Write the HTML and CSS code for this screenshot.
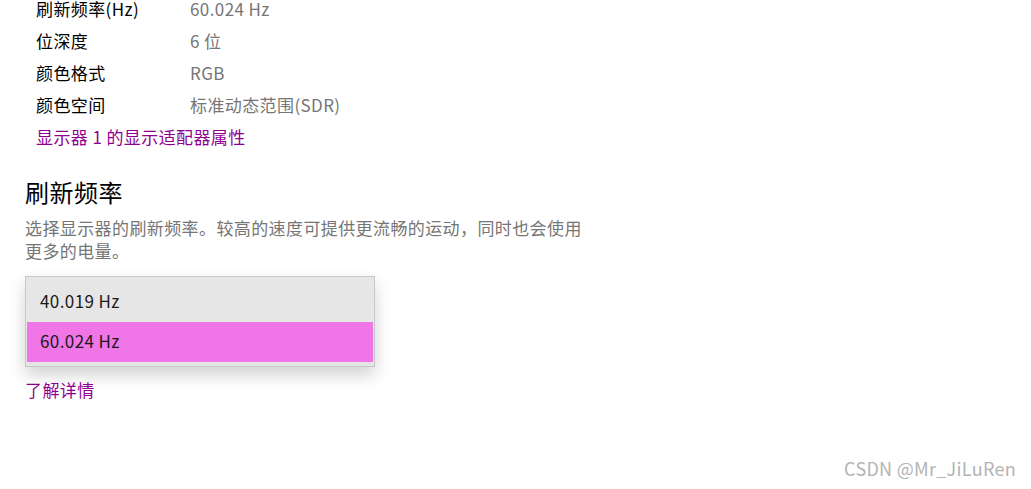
FILE: index.html
```html
<!DOCTYPE html>
<html lang="zh-CN">
<head>
    <meta charset="UTF-8">
    <title>刷新频率</title>
    <link rel="stylesheet" href="styles.css">
</head>
<body>
    <div class="page">
        <div class="props">
            <div class="prop-row"><span class="prop-name">刷新频率(Hz)</span><span class="prop-value">60.024 Hz</span></div>
            <div class="prop-row"><span class="prop-name">位深度</span><span class="prop-value">6 位</span></div>
            <div class="prop-row"><span class="prop-name">颜色格式</span><span class="prop-value">RGB</span></div>
            <div class="prop-row"><span class="prop-name">颜色空间</span><span class="prop-value">标准动态范围(SDR)</span></div>
            <a class="link adapter-link" href="#">显示器 1 的显示适配器属性</a>
        </div>

        <h2 class="section-title">刷新频率</h2>
        <p class="section-desc">选择显示器的刷新频率。较高的速度可提供更流畅的运动，同时也会使用更多的电量。</p>

        <div class="dropdown">
            <div class="dropdown-item">40.019 Hz</div>
            <div class="dropdown-item selected">60.024 Hz</div>
        </div>

        <a class="link more-link" href="#">了解详情</a>
    </div>
    <div class="watermark">CSDN @Mr_JiLuRen</div>
</body>
</html>
```

FILE: styles.css
```css
:root {
    --text: #000000;
    --muted: #767676;
    --link: #8f0091;
    --menu: #e6e6e6;
    --accent: #f075e6;
}

* {
    margin: 0;
    padding: 0;
    box-sizing: border-box;
}

body {
    font-family: "Noto Sans CJK SC", "Noto Sans", sans-serif;
    font-size: 17px;
    letter-spacing: 0.4px;
    color: var(--text);
    background: #ffffff;
    width: 1031px;
    height: 489px;
    overflow: hidden;
    position: relative;
}

.page {
    padding: 0 0 0 25px;
    margin-top: -7px;
}

.props {
    padding-left: 11px;
}

.prop-row {
    display: flex;
    height: 32px;
    line-height: 32px;
}

.prop-name {
    width: 154px;
}

.prop-value {
    color: var(--muted);
}

.link {
    color: var(--link);
    text-decoration: none;
    display: block;
    line-height: 32px;
}

.section-title {
    font-size: 24px;
    font-weight: 400;
    line-height: 32px;
    letter-spacing: 0.5px;
    margin-top: 23px;
}

.section-desc {
    color: var(--muted);
    width: 570px;
    line-height: 23px;
    margin-top: 8px;
}

.dropdown {
    width: 350px;
    margin-top: 14px;
    background: var(--menu);
    border: 1px solid #c8c8c8;
    padding: 0 1px 4px;
    box-shadow: 0 8px 16px rgba(0, 0, 0, 0.18);
}

.dropdown-item {
    height: 45px;
    line-height: 47px;
    padding-left: 13px;
    color: #1a1a1a;
}

.dropdown-item.selected {
    background: var(--accent);
    height: 40px;
    line-height: 38px;
}

.more-link {
    margin-top: 7px;
}

.watermark {
    position: absolute;
    right: 15px;
    bottom: 8px;
    font-size: 18px;
    letter-spacing: 0.3px;
    color: #b4b4b4;
}
```
